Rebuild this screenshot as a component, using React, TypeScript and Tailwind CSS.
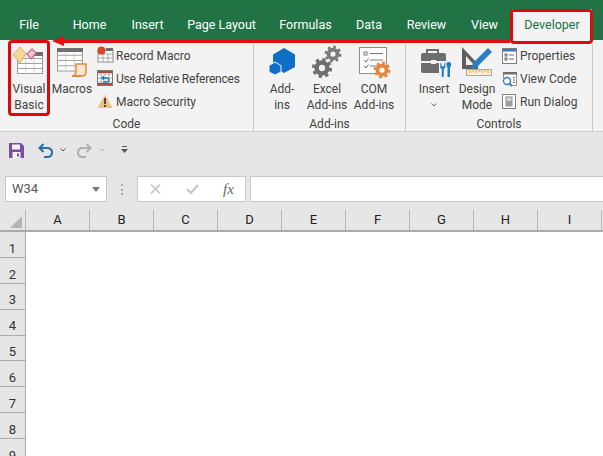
import React from "react";

const font = "font-['Roboto','Liberation_Sans',sans-serif]";

const tabs = [
  { name: "File", w: "w-[58px]" },
  { name: "Home", w: "w-[63px]" },
  { name: "Insert", w: "w-[53px]" },
  { name: "Page Layout", w: "w-[95px]" },
  { name: "Formulas", w: "w-[73px]" },
  { name: "Data", w: "w-[54px]" },
  { name: "Review", w: "w-[61px]" },
  { name: "View", w: "w-[55px]" },
];

const columns = ["A", "B", "C", "D", "E", "F", "G", "H", "I"];
const rows = [1, 2, 3, 4, 5, 6, 7, 8, 9];

function Gear({ cx, cy, r, color }: { cx: number; cy: number; r: number; color: string }) {
  const outer = 2 * Math.PI * r * 0.95;
  return (
    <g>
      <circle cx={cx} cy={cy} r={r * 0.6} fill="none" stroke={color} strokeWidth={r * 0.5} />
      <circle cx={cx} cy={cy} r={r * 0.95} fill="none" stroke={color} strokeWidth={r * 0.34} strokeDasharray={`${outer / 16} ${outer / 16}`} />
    </g>
  );
}

function TableLines({ x, y, w, h }: { x: number; y: number; w: number; h: number }) {
  const cols = [0.33, 0.66];
  const lines = [0.25, 0.5, 0.75];
  return (
    <g stroke="#a3a3a3" strokeWidth="1">
      <rect x={x} y={y} width={w} height={h} fill="#fff" stroke="#9a9a9a" />
      {cols.map((c) => (
        <line key={c} x1={x + w * c} y1={y} x2={x + w * c} y2={y + h} stroke="#d4d4d4" />
      ))}
      {lines.map((l) => (
        <line key={l} x1={x} y1={y + h * l} x2={x + w} y2={y + h * l} />
      ))}
    </g>
  );
}

function VisualBasicIcon() {
  return (
    <svg width="32" height="32" viewBox="0 0 32 32" className="overflow-visible">
      <TableLines x={4.5} y={9.5} w={25} h={20} />
      <rect x={21} y={8} width={9} height={4} fill="#6f6f6f" />
      <path d="M7 3 L13 9.5 L7 19 L0 11 Z" fill="#f3d79b" stroke="#dcb063" />
      <path d="M19 5 L23 9 L18 15 L14 10 Z" fill="#f8c6d6" stroke="#cf6f8f" strokeWidth="1.4" />
    </svg>
  );
}

function MacrosIcon() {
  return (
    <svg width="32" height="32" viewBox="0 0 32 32" className="overflow-visible">
      <TableLines x={1.5} y={6} w={25} h={21} />
      <rect x={1} y={4} width={26} height={4} fill="#6f6f6f" />
      <path d="M20 20 H30 V28 Q30 32 26 32 H17 Q20 31 20 27 Z" fill="#fbe5cf" stroke="#e58a3c" strokeWidth="1.5" />
      <path d="M16 32 H25" stroke="#e58a3c" strokeWidth="2" />
    </svg>
  );
}

function RecordIcon() {
  return (
    <svg width="16" height="18" viewBox="0 0 16 18" className="overflow-visible">
      <rect x="1" y="3" width="15" height="12" fill="#fff" stroke="#8a8a8a" />
      <path d="M1 7 H16 M1 11 H16 M6 7 V15 M11 7 V15" stroke="#a8a8a8" />
      <rect x="9" y="1" width="7" height="3" fill="#6f6f6f" />
      <circle cx="4.5" cy="3.5" r="4" fill="#d2492a" />
    </svg>
  );
}

function RelativeIcon() {
  return (
    <svg width="16" height="17" viewBox="0 0 16 17" className="overflow-visible">
      <rect x="0.5" y="0.5" width="15" height="15" fill="#fff" stroke="#7a7a7a" />
      <path d="M1 4 H15 M1 8 H15 M1 12 H15 M4 1 V15 M8 1 V15 M12 1 V15" stroke="#b5b5b5" />
      <path d="M1 1 H15 V3 H1 Z M1 13 H15 V15 H1 Z" fill="#a64b3a" />
      <path d="M5 8 H10 Q12 8 12 10 Q12 12 9 12 H6" fill="none" stroke="#2a75bb" strokeWidth="1.4" />
      <path d="M3.5 8 L7 5.5 V10.5 Z" fill="#2a75bb" />
    </svg>
  );
}

function WarningIcon() {
  return (
    <svg width="16" height="15" viewBox="0 0 16 15">
      <path d="M8 0.5 L15.5 14 H0.5 Z" fill="#edc27e" />
      <path d="M8 4 V10 M8 11 V13" stroke="#4a4a4a" strokeWidth="2" />
    </svg>
  );
}

function AddinsIcon() {
  return (
    <svg width="32" height="32" viewBox="0 0 32 32" className="overflow-visible">
      <path d="M18 4 L29 10.5 V23 L18 29 L7 23 V10.5 Z" fill="#0f6fc6" />
      <path d="M9 18 L15 21.5 V28 L9 31 L3 28 V21.5 Z" fill="#0f6fc6" stroke="#f3f3f3" strokeWidth="1" />
    </svg>
  );
}

function ExcelAddinsIcon() {
  return (
    <svg width="32" height="32" viewBox="0 0 32 32" className="overflow-visible">
      <Gear cx={11} cy={24} r={9} color="#6e6e6e" />
      <Gear cx={22} cy={10} r={7.5} color="#7a7a7a" />
    </svg>
  );
}

function ComAddinsIcon() {
  return (
    <svg width="32" height="32" viewBox="0 0 32 32" className="overflow-visible">
      <rect x="1.5" y="3.5" width="27" height="26" fill="#fff" stroke="#8f8f8f" />
      <rect x="6" y="8" width="3" height="3" fill="none" stroke="#7a7a7a" />
      <path d="M12 9.5 H25 M12 16 H25 M12 22 H20" stroke="#7a7a7a" />
      <path d="M6 16 L8 18 L10.5 14.5 M6 22 L8 24 L10.5 20.5" fill="none" stroke="#6a6a6a" />
      <Gear cx={24} cy={26} r={7.5} color="#e8853a" />
    </svg>
  );
}

function InsertIcon() {
  return (
    <svg width="34" height="34" viewBox="0 0 34 34" className="overflow-visible">
      <path d="M9 9 V6 H20 V9" fill="none" stroke="#6e6e6e" strokeWidth="2" />
      <path d="M5 9 H26 Q28 9 28 11 V17 H3 V11 Q3 9 5 9 Z" fill="#6e6e6e" />
      <path d="M3 19 H21 V29 H5 Q3 29 3 27 Z" fill="#6e6e6e" />
      <rect x="13" y="16" width="5" height="4" fill="#f3f3f3" />
      <path d="M22 19 V23 Q22 25 23.5 25 V33 H26 V25 Q27.5 25 27.5 23 V19 L26 19 V22 H23.5 V19 Z" fill="#1f7fc0" stroke="#f3f3f3" strokeWidth="0.4" />
      <path d="M28.5 19 Q30.5 17 33 19 V22 Q32 23.5 32 24 V33 H29.5 V24 Q29.5 23.5 28.5 22 Z" fill="#1f7fc0" />
    </svg>
  );
}

function DesignIcon() {
  return (
    <svg width="32" height="32" viewBox="0 0 32 32" className="overflow-visible">
      <path d="M1 3 L17 20 V25 H1 Z M5 12 V21 H13 Z" fill="#5f5f5f" fillRule="evenodd" />
      <path d="M27 4 L31 8 L16 23 L10 26 L12 19 Z" fill="#2a7fc4" />
      <rect x="5.5" y="25.5" width="25" height="6" fill="#fbeedd" stroke="#e19a52" />
      <path d="M9 26 V29 M12 26 V28 M15 26 V29 M18 26 V28 M21 26 V29 M24 26 V28 M27 26 V29" stroke="#e19a52" />
    </svg>
  );
}

function PropertiesIcon() {
  return (
    <svg width="15" height="16" viewBox="0 0 15 16">
      <rect x="0.5" y="0.5" width="14" height="15" fill="#fff" stroke="#7f7f7f" />
      <rect x="1" y="1" width="13" height="2.5" fill="#3c79b4" />
      <rect x="3" y="6" width="2" height="2" fill="none" stroke="#6a6a6a" />
      <rect x="3" y="10" width="2" height="2" fill="none" stroke="#6a6a6a" />
      <path d="M7 7 H12 M7 11 H12" stroke="#6a6a6a" />
    </svg>
  );
}

function ViewCodeIcon() {
  return (
    <svg width="15" height="16" viewBox="0 0 15 16" className="overflow-visible">
      <path d="M1.5 7 V1.5 H14.5 V14.5 H9" fill="#fff" stroke="#8f8f8f" />
      <rect x="1" y="1" width="14" height="2.5" fill="#6f6f6f" />
      <path d="M11 6.5 H13 M11 9 H13 M11 11.5 H13" stroke="#6a6a6a" />
      <circle cx="5" cy="10" r="3.5" fill="#fff" stroke="#2f7cbd" strokeWidth="1.4" />
      <path d="M7.5 12.5 L10 15" stroke="#2f7cbd" strokeWidth="1.8" />
    </svg>
  );
}

function RunDialogIcon() {
  return (
    <svg width="15" height="16" viewBox="0 0 15 16">
      <rect x="0.5" y="0.5" width="13" height="14" fill="#fff" stroke="#7f7f7f" />
      <rect x="4" y="3" width="6" height="9" fill="#d6d6d6" stroke="#8f8f8f" />
      <rect x="4" y="7" width="6" height="5" fill="#9d9d9d" />
    </svg>
  );
}

function LargeButton({ lines, w, icon }: { lines: React.ReactNode[]; w: string; icon: React.ReactNode }) {
  return (
    <div className={`flex ${w} flex-col items-center`}>
      <div className="flex h-8 w-8 items-start justify-start">{icon}</div>
      <div className="mt-[5px] flex flex-col items-center">
        {lines.map((line, i) => (
          <span key={i} className="h-4 whitespace-nowrap text-[12px] leading-4 text-[#444]">
            {line}
          </span>
        ))}
      </div>
    </div>
  );
}

function SmallButton({ label, icon, className = "", iconW = "w-[19px]" }: { label: string; icon: React.ReactNode; className?: string; iconW?: string }) {
  return (
    <div className="flex h-[23px] items-center">
      <div className={`flex ${iconW} items-center`}>{icon}</div>
      <span className={`whitespace-nowrap text-[12px] text-[#444] ${className}`}>{label}</span>
    </div>
  );
}

function Group({ label, w, children }: { label: string; w: string; children: React.ReactNode }) {
  return (
    <div className={`flex ${w} flex-col border-r border-[#c9c9c9]`}>
      <div className="flex h-[72px]">{children}</div>
      <div className="h-3 text-center text-[12px] leading-4 text-[#444]">{label}</div>
    </div>
  );
}

export default function App() {
  return (
    <div className={`relative h-[456px] w-[603px] overflow-hidden bg-white ${font}`}>
      {/* tab strip */}
      <div className="flex h-10 bg-[#217346] pt-[9px] text-[12.5px] text-white">
        {tabs.map((t) => (
          <div key={t.name} className={`${t.w} pt-[8px] text-center leading-4`}>
            {t.name}
          </div>
        ))}
        <div className="flex h-[31px] w-[80px] items-start justify-center bg-[#f3f3f3] pt-[8px] leading-4 text-[#217346]">
          Developer
        </div>
      </div>

      {/* ribbon */}
      <div className="flex h-[92px] border-b border-[#cfcfcf] bg-[#f3f3f3] pt-1">
        <Group label="Code" w="w-[254px]">
          <div className="ml-2 flex">
            <LargeButton w="w-[42px]" lines={["Visual", "Basic"]} icon={<VisualBasicIcon />} />
            <LargeButton w="w-[44px]" lines={["Macros"]} icon={<MacrosIcon />} />
            <div className="ml-[3px] flex flex-col">
              <SmallButton label="Record Macro" icon={<RecordIcon />} />
              <SmallButton label="Use Relative References" icon={<RelativeIcon />} className="tracking-[-0.2px]" />
              <SmallButton label="Macro Security" icon={<WarningIcon />} />
            </div>
          </div>
        </Group>
        <Group label="Add-ins" w="w-[152px]">
          <div className="ml-2 flex">
            <LargeButton w="w-[40px]" lines={["Add-", "ins"]} icon={<AddinsIcon />} />
            <LargeButton w="w-[50px]" lines={["Excel", "Add-ins"]} icon={<ExcelAddinsIcon />} />
            <LargeButton w="w-[44px]" lines={["COM", "Add-ins"]} icon={<ComAddinsIcon />} />
          </div>
        </Group>
        <Group label="Controls" w="w-[187px]">
          <div className="ml-[10px] flex">
            <LargeButton
              w="w-[36px]"
              lines={[
                "Insert",
                <svg className="mt-[6px]" width="6" height="4" viewBox="0 0 6 4">
                  <path d="M0.5 0.5 L3 3 L5.5 0.5" fill="none" stroke="#666" />
                </svg>,
              ]}
              icon={<InsertIcon />}
            />
            <LargeButton w="w-[50px]" lines={["Design", "Mode"]} icon={<DesignIcon />} />
            <div className="flex flex-col">
              <SmallButton label="Properties" icon={<PropertiesIcon />} iconW="w-[18px]" />
              <SmallButton label="View Code" icon={<ViewCodeIcon />} iconW="w-[18px]" />
              <SmallButton label="Run Dialog" icon={<RunDialogIcon />} iconW="w-[18px]" />
            </div>
          </div>
        </Group>
      </div>

      {/* quick access + formula bar */}
      <div className="bg-[#e6e6e6]">
        <div className="flex h-11 items-center pb-2 pl-[9px]">
          <svg width="15" height="15" viewBox="0 0 15 15">
            <path d="M0 0 H12 L15 3 V15 H0 Z" fill="#7b4f9e" />
            <rect x="3" y="1.5" width="8" height="5" fill="#f3f0f6" />
            <rect x="3.5" y="9" width="8" height="6" fill="#f3f0f6" />
            <rect x="8" y="10.5" width="2" height="3" fill="#7b4f9e" />
          </svg>
          <svg className="ml-[14px]" width="15" height="15" viewBox="0 0 15 15">
            <path d="M2 5 H9 Q14 5 14 9.5 Q14 14 9 14 H6" fill="none" stroke="#2a6ea8" strokeWidth="2" />
            <path d="M5.5 1 L1.5 5 L5.5 9" fill="none" stroke="#2a6ea8" strokeWidth="2" />
          </svg>
          <svg className="ml-[7px]" width="6" height="4" viewBox="0 0 6 4">
            <path d="M0.5 0.5 L3 3 L5.5 0.5" fill="none" stroke="#555" />
          </svg>
          <svg className="ml-[11px]" width="15" height="15" viewBox="0 0 15 15">
            <path d="M13 5 H6 Q1 5 1 9.5 Q1 14 6 14 H9" fill="none" stroke="#b0b0b0" strokeWidth="2" />
            <path d="M9.5 1 L13.5 5 L9.5 9" fill="none" stroke="#b0b0b0" strokeWidth="2" />
          </svg>
          <svg className="ml-[7px]" width="6" height="4" viewBox="0 0 6 4">
            <path d="M0.5 0.5 L3 3 L5.5 0.5" fill="none" stroke="#b0b0b0" />
          </svg>
          <svg className="ml-[16px]" width="7" height="8" viewBox="0 0 7 8">
            <path d="M1 0.5 H6" stroke="#555" />
            <path d="M0 3 H7 L3.5 7 Z" fill="#555" />
          </svg>
        </div>
        <div className="flex h-[26px] pl-[5px]">
          <div className="flex w-[102px] items-center justify-between border border-[#c8c8c8] bg-white pl-[6px] pr-[6px] text-[13px] text-[#555]">
            <span>W34</span>
            <svg width="8" height="5" viewBox="0 0 8 5">
              <path d="M0 0 H8 L4 5 Z" fill="#777" />
            </svg>
          </div>
          <div className="flex w-[30px] items-center justify-center">
            <div className="h-[11px] border-l-2 border-dotted border-[#aaa]" />
          </div>
          <div className="flex w-[109px] items-center border border-[#c8c8c8] bg-white pl-[12px]">
            <svg width="11" height="10" viewBox="0 0 11 10">
              <path d="M1 0.5 L10 9.5 M10 0.5 L1 9.5" stroke="#c4c4c4" strokeWidth="1.6" />
            </svg>
            <svg className="ml-[25px]" width="13" height="10" viewBox="0 0 13 10">
              <path d="M1 5 L5 9 L12 1" fill="none" stroke="#c4c4c4" strokeWidth="2" />
            </svg>
            <span className="ml-[24px] font-['Liberation_Serif',serif] text-[15px] italic leading-none text-[#666]">fx</span>
          </div>
          <div className="ml-[4px] flex-1 border-y border-l border-[#c8c8c8] bg-white" />
        </div>
        <div className="mt-2 flex h-[22px] border-b-2 border-[#ababab]">
          <div className="relative w-[26px] border-r border-[#b8b8b8]">
            <div className="absolute bottom-[2px] right-[3px] h-0 w-0 border-b-[12px] border-l-[12px] border-b-[#b4b4b4] border-l-transparent" />
          </div>
          {columns.map((c) => (
            <div key={c} className="flex w-16 items-center justify-center border-r border-[#b8b8b8] text-[13px] text-[#222]">
              {c}
            </div>
          ))}
        </div>
      </div>

      {/* sheet */}
      <div className="flex flex-col">
        {rows.map((r) => (
          <div key={r} className="flex h-[25.9px] w-[26px] shrink-0 items-center justify-center border-r border-b border-[#ababab] bg-[#e6e6e6] pt-[8px] text-[13px] text-[#333]">
            {r}
          </div>
        ))}
      </div>

      {/* red callouts */}
      <div className="absolute left-[8px] top-[40px] h-[76px] w-[42px] rounded-sm border-[3px] border-[#dd0a0a]" />
      <div className="absolute left-[510px] top-[9px] h-[35px] w-[83px] rounded-sm border-[3px] border-[#dd0a0a]" />
      <div className="absolute left-[60px] top-[40px] h-[3px] w-[450px] bg-[#e60f0f]" />
      <div className="absolute left-[52px] top-[36px] h-0 w-0 border-y-[5.5px] border-r-[12px] border-y-transparent border-r-[#e60f0f]" />
    </div>
  );
}
